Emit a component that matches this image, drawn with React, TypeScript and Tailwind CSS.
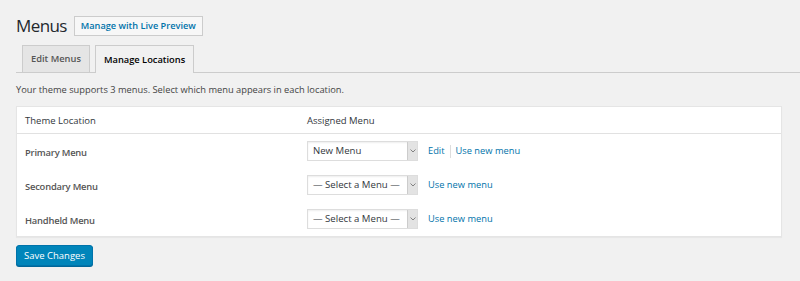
import React from 'react';

const font = { fontFamily: '"Open Sans", "Noto Sans", sans-serif' };

const Select: React.FC<{ value: string }> = ({ value }) => (
  <div className="flex h-[20px] w-[111px] border border-[#ddd] bg-white shadow-[inset_0_1px_2px_rgba(0,0,0,0.07)]">
    <div className="flex flex-1 items-center pl-[5px] text-[9.6px] text-[#32373c]">{value}</div>
    <div className="flex w-[10px] items-center justify-center border-l border-[#ccc] bg-[#e3e3e3]">
      <svg width="6" height="4" viewBox="0 0 6 4" fill="none">
        <path d="M0.5 0.5 L3 3 L5.5 0.5" stroke="#777" strokeWidth="0.9" />
      </svg>
    </div>
  </div>
);

export default function App() {
  const rows = [
    { name: 'Primary Menu', value: 'New Menu', edit: true },
    { name: 'Secondary Menu', value: '— Select a Menu —', edit: false },
    { name: 'Handheld Menu', value: '— Select a Menu —', edit: false },
  ];

  return (
    <div className="h-[281px] w-[800px] overflow-hidden bg-[#f1f1f1] pl-[16px] pr-[18px]" style={font}>
      {/* Title */}
      <div className="flex items-center gap-[7px] pt-[15px]">
        <h1 className="text-[17px] leading-[22px] tracking-[-0.6px] text-[#23282d]">Menus</h1>
        <button className="h-[20px] border border-[#ccc] bg-[#f7f7f7] px-[6px] text-[9.2px] font-semibold leading-[18px] text-[#0073aa]">
          Manage with Live Preview
        </button>
      </div>

      {/* Tabs */}
      <div className="mt-[9px] mr-[-18px] flex h-[27px] items-end border-b border-[#ccc] pl-[6px]">
        <div className="mr-[5px] flex h-[27px] items-center border border-b-0 border-[#ccc] bg-[#e5e5e5] px-[8px] text-[9.3px] font-semibold text-[#555]">
          Edit Menus
        </div>
        <div className="mb-[-1px] flex h-[28px] items-center border border-b-0 border-[#ccc] bg-[#f1f1f1] px-[8px] text-[9.3px] font-semibold text-black">
          Manage Locations
        </div>
      </div>

      <p className="mt-[10px] text-[9.3px] leading-[14px] text-[#444]">
        Your theme supports 3 menus. Select which menu appears in each location.
      </p>

      {/* Locations table */}
      <div className="mt-[9px] border border-[#e5e5e5] bg-white shadow-[0_1px_1px_rgba(0,0,0,0.04)]">
        <div className="flex h-[27px] items-center border-b border-[#e1e1e1] pt-[2px] text-[9.5px] text-[#32373c]">
          <div className="w-[290px] pl-[8px]">Theme Location</div>
          <div>Assigned Menu</div>
        </div>
        {rows.map((r, i) => (
          <div key={i} className="flex h-[34px] items-center">
            <div className="w-[290px] pl-[8px] pt-[4px] text-[9.4px] font-semibold tracking-[-0.2px] text-[#555]">{r.name}</div>
            <Select value={r.value} />
            <div className="ml-[10px] flex items-center text-[9.3px] text-[#0073aa]">
              {r.edit && (
                <>
                  <span>Edit</span>
                  <span className="mx-[5px] h-[13px] w-px bg-[#ddd]" />
                </>
              )}
              <span>Use new menu</span>
            </div>
          </div>
        ))}
      </div>

      <button className="mt-[8px] h-[21px] rounded-[3px] border border-[#0073aa] bg-[#0085ba] px-[7px] text-[9.5px] leading-[19px] text-white shadow-[0_1px_0_#006799]">
        Save Changes
      </button>
    </div>
  );
}
